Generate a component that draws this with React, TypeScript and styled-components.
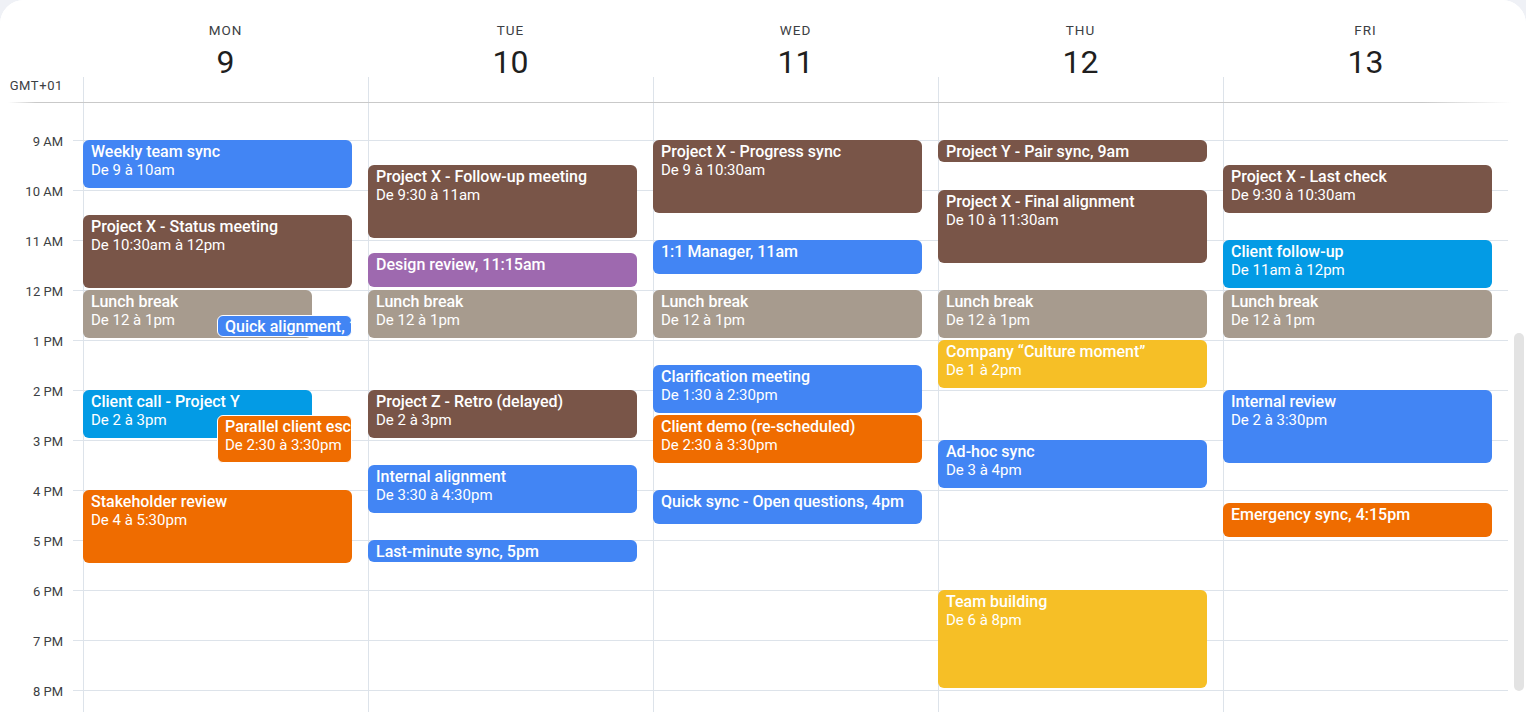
import React from "react";
import styled, { createGlobalStyle } from "styled-components";

const GlobalStyle = createGlobalStyle`
  html, body { margin: 0; padding: 0; background: #eff1f6; }
  body { font-family: Roboto, "Noto Sans", Arial, sans-serif; overflow: hidden; }
  * { box-sizing: border-box; }
`;

const HOUR = 50;
const START = 8;
const GUTTER = 83;
const COL = 285;
const LINE = "#dde3ea";

const C = {
  blue: "#4285f4",
  brown: "#795548",
  tan: "#a79b8e",
  purple: "#9e69af",
  peacock: "#039be5",
  orange: "#ef6c00",
  yellow: "#f6bf26",
};

type Ev = {
  d: number;
  s: number;
  e: number;
  t: string;
  time?: string;
  c: string;
  l?: number;
  w?: number;
  outline?: boolean;
};

const lunch = (d: number, w?: number): Ev => ({ d, s: 12, e: 13, t: "Lunch break", time: "De 12 à 1pm", c: C.tan, w });

const events: Ev[] = [
  { d: 0, s: 9, e: 10, t: "Weekly team sync", time: "De 9 à 10am", c: C.blue },
  { d: 0, s: 10.5, e: 12, t: "Project X - Status meeting", time: "De 10:30am à 12pm", c: C.brown },
  lunch(0, 229),
  { d: 0, s: 12.5, e: 13, t: "Quick alignment, 12:30pm", c: C.blue, l: 134, w: 135, outline: true },
  { d: 0, s: 14, e: 15, t: "Client call - Project Y", time: "De 2 à 3pm", c: C.peacock, w: 229 },
  { d: 0, s: 14.5, e: 15.5, t: "Parallel client escalation", time: "De 2:30 à 3:30pm", c: C.orange, l: 134, w: 135, outline: true },
  { d: 0, s: 16, e: 17.5, t: "Stakeholder review", time: "De 4 à 5:30pm", c: C.orange },

  { d: 1, s: 9.5, e: 11, t: "Project X - Follow-up meeting", time: "De 9:30 à 11am", c: C.brown },
  { d: 1, s: 11.25, e: 12, t: "Design review, 11:15am", c: C.purple },
  lunch(1),
  { d: 1, s: 14, e: 15, t: "Project Z - Retro (delayed)", time: "De 2 à 3pm", c: C.brown },
  { d: 1, s: 15.5, e: 16.5, t: "Internal alignment", time: "De 3:30 à 4:30pm", c: C.blue },
  { d: 1, s: 17, e: 17.5, t: "Last-minute sync, 5pm", c: C.blue },

  { d: 2, s: 9, e: 10.5, t: "Project X - Progress sync", time: "De 9 à 10:30am", c: C.brown },
  { d: 2, s: 11, e: 11.75, t: "1:1 Manager, 11am", c: C.blue },
  lunch(2),
  { d: 2, s: 13.5, e: 14.5, t: "Clarification meeting", time: "De 1:30 à 2:30pm", c: C.blue },
  { d: 2, s: 14.5, e: 15.5, t: "Client demo (re-scheduled)", time: "De 2:30 à 3:30pm", c: C.orange },
  { d: 2, s: 16, e: 16.75, t: "Quick sync - Open questions, 4pm", c: C.blue },

  { d: 3, s: 9, e: 9.5, t: "Project Y - Pair sync, 9am", c: C.brown },
  { d: 3, s: 10, e: 11.5, t: "Project X - Final alignment", time: "De 10 à 11:30am", c: C.brown },
  lunch(3),
  { d: 3, s: 13, e: 14, t: "Company “Culture moment”", time: "De 1 à 2pm", c: C.yellow },
  { d: 3, s: 15, e: 16, t: "Ad-hoc sync", time: "De 3 à 4pm", c: C.blue },
  { d: 3, s: 18, e: 20, t: "Team building", time: "De 6 à 8pm", c: C.yellow },

  { d: 4, s: 9.5, e: 10.5, t: "Project X - Last check", time: "De 9:30 à 10:30am", c: C.brown },
  { d: 4, s: 11, e: 12, t: "Client follow-up", time: "De 11am à 12pm", c: C.peacock },
  lunch(4),
  { d: 4, s: 14, e: 15.5, t: "Internal review", time: "De 2 à 3:30pm", c: C.blue },
  { d: 4, s: 16.25, e: 17, t: "Emergency sync, 4:15pm", c: C.orange },
];

const days = [
  { n: "MON", d: 9 },
  { n: "TUE", d: 10 },
  { n: "WED", d: 11 },
  { n: "THU", d: 12 },
  { n: "FRI", d: 13 },
];

// first (8 AM) and last slots sit outside the visible window, so they carry no label
const hours = ["", "9 AM", "10 AM", "11 AM", "12 PM", "1 PM", "2 PM", "3 PM", "4 PM", "5 PM", "6 PM", "7 PM", "8 PM", ""];

const Card = styled.div`
  width: 1526px;
  height: 712px;
  background: #fff;
  border-radius: 24px 24px 0 0;
  overflow: hidden;
  display: flex;
  flex-direction: column;
`;

const Header = styled.div`
  position: relative;
  z-index: 3;
  flex: none;
  height: 102px;
  background: #fff;
  display: grid;
  grid-template-columns: ${GUTTER}px repeat(5, ${COL}px) 1fr;
  &::after {
    content: "";
    position: absolute;
    left: 8px;
    right: 14px;
    bottom: -1px;
    height: 1px;
    background: linear-gradient(
      to right,
      rgba(201, 201, 201, 0) 0,
      #c9c9c9 28px,
      #c9c9c9 calc(100% - 90px),
      rgba(201, 201, 201, 0) 100%
    );
  }
`;

const GutterHead = styled.div`
  display: flex;
  flex-direction: column;
  justify-content: flex-end;
`;

const TzLabel = styled.div`
  height: 25px;
  padding: 1px 20px 0 0;
  text-align: right;
  font-size: 13px;
  line-height: 16px;
  letter-spacing: 0.6px;
  color: #3c4043;
`;

const DayHead = styled.div`
  display: flex;
  flex-direction: column;
`;

const DayTitle = styled.div`
  height: 77px;
  display: flex;
  flex-direction: column;
  align-items: center;
  padding-top: 22px;
`;

const DayName = styled.div`
  font-size: 13.5px;
  line-height: 16px;
  font-weight: 400;
  letter-spacing: 1px;
  color: #3c4043;
`;

const DayNumber = styled.div`
  margin-top: 9px;
  font-size: 32px;
  line-height: 30px;
  font-weight: 400;
  color: #1f1f1f;
`;

const AllDay = styled.div`
  height: 25px;
  border-left: 1px solid ${LINE};
`;

const Viewport = styled.div`
  flex: 1;
  min-height: 0;
  display: flex;
  overflow: hidden;
`;

const GridArea = styled.div`
  width: ${GUTTER + COL * 5}px;
  overflow: hidden;
`;

const GridContent = styled.div`
  margin-top: -12px;
  height: ${hours.length * HOUR}px;
  display: grid;
  grid-template-columns: ${GUTTER}px repeat(5, ${COL}px);
  background-image: linear-gradient(to bottom, ${LINE} 1px, transparent 1px);
  background-size: calc(100% - 73px + 1px) ${HOUR}px;
  background-position: 73px 0;
  background-repeat: repeat-y;
`;

const TimeGutter = styled.div`
  display: flex;
  flex-direction: column;
`;

const HourSlot = styled.div`
  height: ${HOUR}px;
  flex: none;
`;

const HourLabel = styled.div`
  margin-top: -6px;
  padding-right: 20px;
  text-align: right;
  font-size: 13px;
  line-height: 16px;
  color: #3c4043;
`;

const DayColumn = styled.div`
  position: relative;
  border-left: 1px solid ${LINE};
`;

const EventCard = styled.div<{ $color: string; $outline?: boolean }>`
  position: absolute;
  background: ${(p) => p.$color};
  border-radius: 6px;
  border: ${(p) => (p.$outline ? "1px solid #fff" : "none")};
  padding: ${(p) => (p.$outline ? "2px 7px" : "3px 8px")};
  color: #fff;
  overflow: hidden;
  white-space: nowrap;
`;

const EventTitle = styled.div`
  font-size: 16px;
  line-height: 18px;
  font-weight: 500;
`;

const EventTime = styled.div`
  font-size: 15px;
  line-height: 18px;
  font-weight: 400;
`;

const ScrollTrack = styled.div`
  flex: none;
  width: 18px;
  padding-left: 6px;
`;

const Thumb = styled.div`
  margin-top: 231px;
  width: 10px;
  height: 358px;
  border-radius: 5px;
  background: #e3e3e3;
`;

function EventBlock({ ev }: { ev: Ev }) {
  const dur = ev.e - ev.s;
  const top = (ev.s - START) * HOUR;
  const height = Math.floor(dur * HOUR) - 2 - (dur < 1 ? 1 : 0);
  const left = -1 + (ev.l ?? 0);
  const width = ev.w ?? COL - 16;
  return (
    <EventCard $color={ev.c} $outline={ev.outline} style={{ top, height, left, width }}>
      <EventTitle>{ev.t}</EventTitle>
      {ev.time && <EventTime>{ev.time}</EventTime>}
    </EventCard>
  );
}

export default function App() {
  return (
    <>
      <GlobalStyle />
      <Card>
        <Header>
          <GutterHead>
            <TzLabel>GMT+01</TzLabel>
          </GutterHead>
          {days.map((d) => (
            <DayHead key={d.n}>
              <DayTitle>
                <DayName>{d.n}</DayName>
                <DayNumber>{d.d}</DayNumber>
              </DayTitle>
              <AllDay />
            </DayHead>
          ))}
          <div />
        </Header>
        <Viewport>
          <GridArea>
            <GridContent>
              <TimeGutter>
                {hours.map((h, i) => (
                  <HourSlot key={i}>
                    {h && <HourLabel>{h}</HourLabel>}
                  </HourSlot>
                ))}
              </TimeGutter>
              {days.map((d, i) => (
                <DayColumn key={d.n}>
                  {events
                    .filter((ev) => ev.d === i)
                    .map((ev, k) => (
                      <EventBlock key={k} ev={ev} />
                    ))}
                </DayColumn>
              ))}
            </GridContent>
          </GridArea>
          <ScrollTrack>
            <Thumb />
          </ScrollTrack>
        </Viewport>
      </Card>
    </>
  );
}
